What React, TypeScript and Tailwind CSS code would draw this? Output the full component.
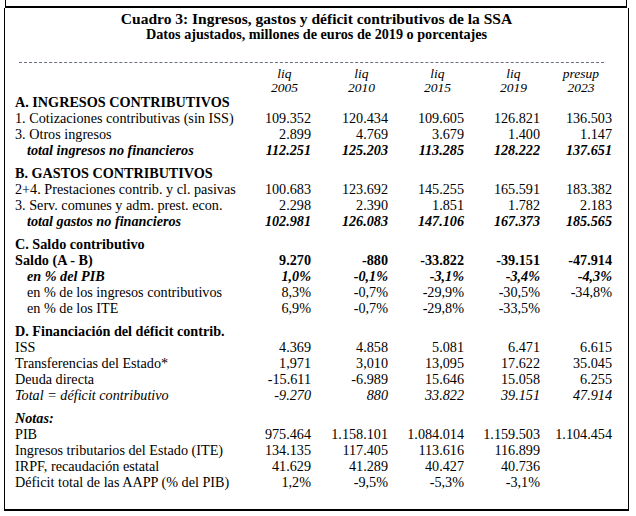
import React from "react";

type Style = "normal" | "bold" | "boldItalic" | "italic";

type Row = {
  label: string;
  values?: string[];
  style?: Style;
  indent?: boolean;
  heading?: boolean;
  gap?: boolean;
};

const rows: Row[] = [
  { label: "A. INGRESOS CONTRIBUTIVOS", heading: true },
  { label: "1. Cotizaciones contributivas (sin ISS)", values: ["109.352", "120.434", "109.605", "126.821", "136.503"] },
  { label: "3. Otros ingresos", values: ["2.899", "4.769", "3.679", "1.400", "1.147"] },
  { label: "total ingresos no financieros", values: ["112.251", "125.203", "113.285", "128.222", "137.651"], style: "boldItalic", indent: true },
  { label: "B. GASTOS CONTRIBUTIVOS", heading: true, gap: true },
  { label: "2+4. Prestaciones contrib. y cl. pasivas", values: ["100.683", "123.692", "145.255", "165.591", "183.382"] },
  { label: "3. Serv. comunes y adm. prest. econ.", values: ["2.298", "2.390", "1.851", "1.782", "2.183"] },
  { label: "total gastos no financieros", values: ["102.981", "126.083", "147.106", "167.373", "185.565"], style: "boldItalic", indent: true },
  { label: "C. Saldo contributivo", heading: true, gap: true },
  { label: "Saldo (A - B)", values: ["9.270", "-880", "-33.822", "-39.151", "-47.914"], style: "bold" },
  { label: "en % del PIB", values: ["1,0%", "-0,1%", "-3,1%", "-3,4%", "-4,3%"], style: "boldItalic", indent: true },
  { label: "en % de los ingresos contributivos", values: ["8,3%", "-0,7%", "-29,9%", "-30,5%", "-34,8%"], indent: true },
  { label: "en % de los ITE", values: ["6,9%", "-0,7%", "-29,8%", "-33,5%", ""], indent: true },
  { label: "D. Financiación del déficit contrib.", heading: true, gap: true },
  { label: "ISS", values: ["4.369", "4.858", "5.081", "6.471", "6.615"] },
  { label: "Transferencias del Estado*", values: ["1,971", "3,010", "13,095", "17.622", "35.045"] },
  { label: "Deuda directa", values: ["-15.611", "-6.989", "15.646", "15.058", "6.255"] },
  { label: "Total = déficit contributivo", values: ["-9.270", "880", "33.822", "39.151", "47.914"], style: "italic" },
  { label: "Notas:", style: "boldItalic", gap: true },
  { label: "PIB", values: ["975.464", "1.158.101", "1.084.014", "1.159.503", "1.104.454"] },
  { label: "Ingresos tributarios del Estado (ITE)", values: ["134.135", "117.405", "113.616", "116.899", ""] },
  { label: "IRPF, recaudación estatal", values: ["41.629", "41.289", "40.427", "40.736", ""] },
  { label: "Déficit total de las AAPP (% del PIB)", values: ["1,2%", "-9,5%", "-5,3%", "-3,1%", ""] },
];

const headers = [
  ["liq", "2005"],
  ["liq", "2010"],
  ["liq", "2015"],
  ["liq", "2019"],
  ["presup", "2023"],
];

const styleClass = (s?: Style) =>
  s === "bold"
    ? "font-bold"
    : s === "boldItalic"
    ? "font-bold italic"
    : s === "italic"
    ? "italic"
    : "";

const cols = "grid grid-cols-[220px_76px_77px_76px_76px_72px]";

export default function App() {
  return (
    <div className="w-[636px] h-[516px] bg-white text-black font-['Liberation_Serif','Times_New_Roman',serif]">
      <div className="ml-[5px] w-[622px] h-[8px] border-x border-b-2 border-black" />
      <div className="ml-[4px] w-[625px] h-[503px] border-x border-b-2 border-black">
        <div className="pt-[2px] text-center font-bold">
          <div className="text-[15.5px] leading-[17px]">
            Cuadro 3: Ingresos, gastos y déficit contributivos de la SSA
          </div>
          <div className="text-[14.2px] leading-[15px]">
            Datos ajustados, millones de euros de 2019 o porcentajes
          </div>
        </div>

        <div className="mt-[20px] ml-[14px] w-[585px] border-t border-dashed border-gray-500" />

        <div className={`${cols} ml-[10px] mt-[4px] italic text-[13.5px] leading-[14px]`}>
          <div />
          {headers.map(([a, b]) => (
            <div key={b} className="flex justify-end pr-[13px]">
              <div className="flex flex-col items-center">
                <span>{a}</span>
                <span>{b}</span>
              </div>
            </div>
          ))}
        </div>

        <div className="ml-[10px] -mt-[1px] text-[14.2px]">
          {rows.map((r, i) => (
            <div
              key={i}
              className={`${cols} h-[16px] leading-[16px] items-center ${r.gap ? "mt-[7px]" : ""}`}
            >
              <div
                className={`whitespace-nowrap ${
                  r.heading ? "font-bold" : styleClass(r.style)
                } ${r.indent ? "pl-[12px]" : ""}`}
              >
                {r.label}
              </div>
              {(r.values ?? []).map((v, j) => (
                <div key={j} className={`text-right whitespace-nowrap ${styleClass(r.style)}`}>
                  {v}
                </div>
              ))}
            </div>
          ))}
        </div>
      </div>
    </div>
  );
}
